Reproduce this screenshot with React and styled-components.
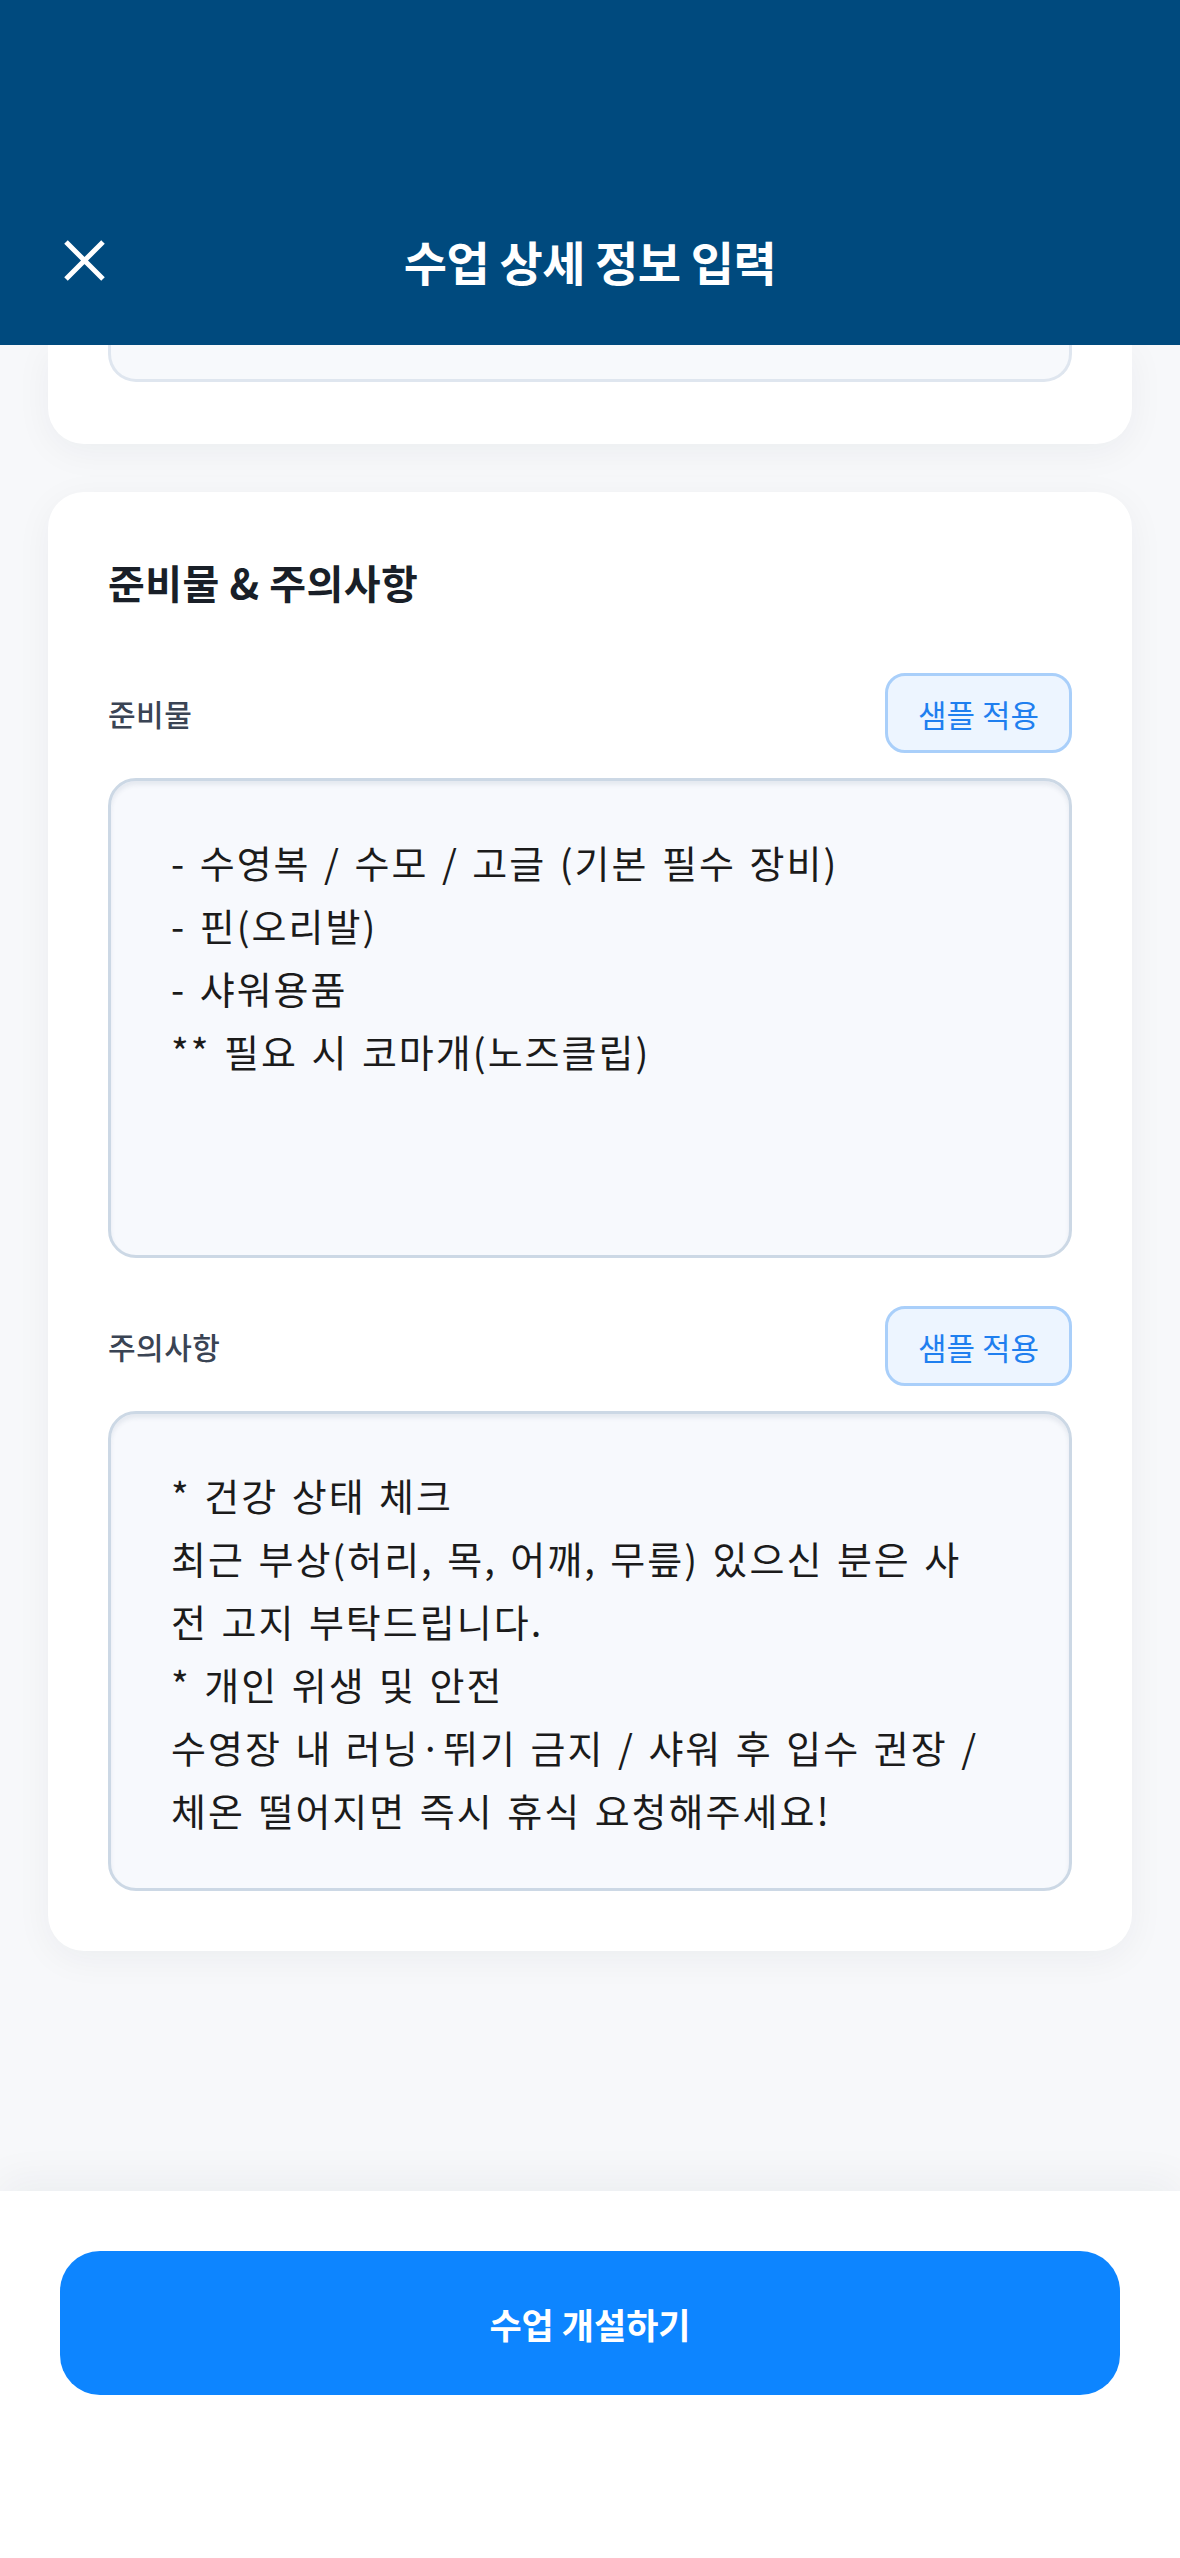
import React from 'react'
import styled, { createGlobalStyle } from 'styled-components'

const GlobalStyle = createGlobalStyle`
    * { box-sizing: border-box; }
    html, body { margin: 0; padding: 0; }
    body {
        font-family: "Noto Sans CJK KR", "Noto Sans", sans-serif;
        background: #f7f8fa;
    }
`

const Screen = styled.div`
    display: flex;
    flex-direction: column;
    height: 100vh;
    background: #f7f8fa;
`

const Header = styled.header`
    flex: none;
    height: 345px;
    padding-top: 176px;
    background: #004a7e;
    position: relative;
    z-index: 2;
`

const NavRow = styled.div`
    display: grid;
    grid-template-columns: 1fr auto 1fr;
    align-items: center;
    height: 169px;
    padding: 0 64px;
`

const CloseButton = styled.button`
    justify-self: start;
    display: flex;
    align-items: center;
    justify-content: center;
    width: 41px;
    height: 41px;
    padding: 0;
    border: none;
    background: none;
`

const HeaderTitle = styled.h1`
    margin: 0;
    font-size: 47px;
    font-weight: 600;
    color: #ffffff;
    letter-spacing: -0.5px;
`

const Body = styled.main`
    flex: 1;
    overflow: hidden;
    display: flex;
    flex-direction: column;
    gap: 48px;
    padding: 0 48px;
`

const Card = styled.section`
    background: #ffffff;
    border-radius: ${p => (p.$tail ? '0 0 36px 36px' : '36px')};
    box-shadow: 0 8px 36px rgba(20, 30, 50, 0.05);
    padding: ${p => (p.$tail ? '0 60px 62px' : '60px')};
`

const InputTail = styled.div`
    height: 37px;
    background: #f7f9fc;
    border: 3px solid #dfe6ef;
    border-top: none;
    border-radius: 0 0 28px 28px;
`

const SectionTitle = styled.h2`
    margin: 0 0 61px;
    font-size: 40px;
    line-height: 60px;
    font-weight: 700;
    color: #191f28;
    letter-spacing: 0.5px;
`

const Fields = styled.div`
    display: flex;
    flex-direction: column;
    gap: 48px;
`

const Field = styled.div`
    display: flex;
    flex-direction: column;
    gap: 25px;
`

const LabelRow = styled.div`
    display: flex;
    align-items: center;
    justify-content: space-between;
    height: 80px;
`

const Label = styled.label`
    font-size: 30px;
    font-weight: 500;
    color: #3a4454;
    letter-spacing: 0.5px;
`

const SampleButton = styled.button`
    width: 187px;
    height: 80px;
    border: 3px solid #a9cffa;
    border-radius: 20px;
    background: #edf5ff;
    color: #1f7fef;
    font-family: inherit;
    font-size: 31px;
    font-weight: 400;
`

const TextBox = styled.div`
    height: 480px;
    padding: 49px 60px;
    background: #f7f9fd;
    border: 3px solid #ccd8e5;
    border-radius: 28px;
    box-shadow: inset 0 4px 4px rgba(60, 80, 110, 0.09);
    font-size: 38px;
    line-height: 63px;
    letter-spacing: 2px;
    word-spacing: 3px;
    color: #1b1b1b;
    white-space: pre;
    overflow: hidden;
`

const BottomBar = styled.footer`
    flex: none;
    height: 367px;
    padding: 60px 60px 0;
    background: #ffffff;
    box-shadow: 0 -10px 40px rgba(20, 30, 50, 0.05);
    position: relative;
`

const SubmitButton = styled.button`
    width: 100%;
    height: 144px;
    border: none;
    border-radius: 40px;
    background: #0d85ff;
    color: #ffffff;
    font-family: inherit;
    font-size: 35px;
    font-weight: 600;
`

const CloseIcon = () => (
    <svg width="41" height="41" viewBox="0 0 41 41" fill="none">
        <path d="M2 2 L39 39 M39 2 L2 39" stroke="#ffffff" strokeWidth="5" />
    </svg>
)

const fields = [
    {
        id: 'supplies',
        label: '준비물',
        text: '- 수영복 / 수모 / 고글 (기본 필수 장비)\n- 핀(오리발)\n- 샤워용품\n** 필요 시 코마개(노즈클립)',
    },
    {
        id: 'notice',
        label: '주의사항',
        text: '* 건강 상태 체크\n최근 부상(허리, 목, 어깨, 무릎) 있으신 분은 사\n전 고지 부탁드립니다.\n* 개인 위생 및 안전\n수영장 내 러닝·뛰기 금지 / 샤워 후 입수 권장 /\n체온 떨어지면 즉시 휴식 요청해주세요!',
    },
]

export default function App() {
    return (
        <>
            <GlobalStyle />
            <Screen>
                <Header>
                    <NavRow>
                        <CloseButton aria-label="닫기">
                            <CloseIcon />
                        </CloseButton>
                        <HeaderTitle>수업 상세 정보 입력</HeaderTitle>
                        <span />
                    </NavRow>
                </Header>
                <Body>
                    {/* previous card, scrolled up under the header */}
                    <Card $tail>
                        <InputTail />
                    </Card>
                    <Card>
                        <SectionTitle>준비물 &amp; 주의사항</SectionTitle>
                        <Fields>
                            {fields.map(field => (
                                <Field key={field.id}>
                                    <LabelRow>
                                        <Label>{field.label}</Label>
                                        <SampleButton>샘플 적용</SampleButton>
                                    </LabelRow>
                                    <TextBox>{field.text}</TextBox>
                                </Field>
                            ))}
                        </Fields>
                    </Card>
                </Body>
                <BottomBar>
                    <SubmitButton>수업 개설하기</SubmitButton>
                </BottomBar>
            </Screen>
        </>
    )
}
